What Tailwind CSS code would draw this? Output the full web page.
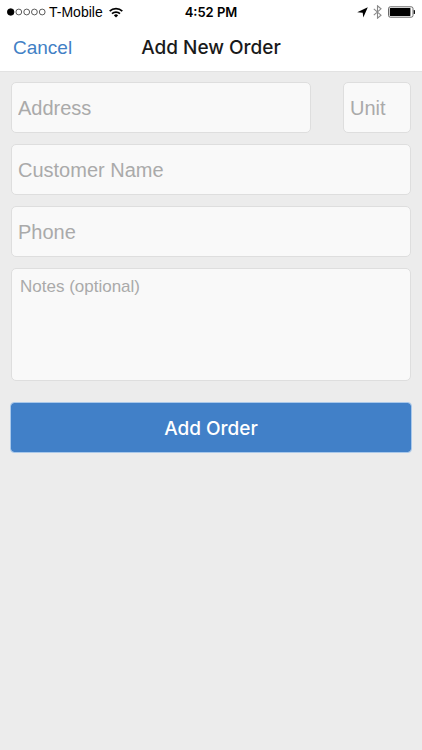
<!DOCTYPE html>
<html lang="en">
<head>
<meta charset="utf-8">
<meta name="viewport" content="width=device-width, initial-scale=1">
<title>Add New Order</title>
<script src="https://cdn.jsdelivr.net/npm/@tailwindcss/browser@4"></script>
</head>
<body class="min-h-screen bg-[#ececec] font-['Liberation_Sans',Arial,sans-serif] text-[#1a1a1a]">
<header class="border-b border-[#e2e2e2] bg-white">
  <div class="grid h-6 grid-cols-[1fr_auto_1fr] items-center px-[7px] text-black">
    <div class="flex items-center">
      <svg class="h-2 w-10" viewBox="0 0 40 8" fill="none" stroke="#333" stroke-width=".8" aria-hidden="true">
        <circle cx="3.7" cy="4" r="3.3" fill="#000" stroke="#000"/>
        <circle cx="11.8" cy="4" r="2.9"/><circle cx="19.7" cy="4" r="2.9"/><circle cx="27.4" cy="4" r="2.9"/><circle cx="35.2" cy="4" r="2.9"/>
      </svg>
      <span class="ml-[2px] text-[14px] leading-4">T-Mobile</span>
      <svg class="ml-[6px] h-[11px] w-[14px]" viewBox="0 0 14 11" fill="none" stroke="#000" stroke-width="1.7" aria-hidden="true">
        <path d="M.7 4.1a9 9 0 0 1 12.6 0M3 6.7a5.7 5.7 0 0 1 8 0"/>
        <path d="M4.9 8.4a3 3 0 0 1 4.2 0L7 10.6z" fill="#000" stroke="none"/>
      </svg>
    </div>
    <span class="font-['Inter','Liberation_Sans',sans-serif] text-[13px] leading-4 font-semibold">4:52 PM</span>
    <div class="flex items-center justify-end">
      <svg class="h-[11px] w-[11px]" viewBox="0 0 11 11" aria-hidden="true"><path d="M10.8.2 6.3 10.6 5.7 5.7.2 5.2z" fill="#000"/></svg>
      <svg class="ml-[5px] h-[14px] w-[9px]" viewBox="0 0 9 14" fill="none" stroke="#888" stroke-width="1.1" aria-hidden="true"><path d="M.8 3.8 8 10.2 4.5 13.2V.8L8 3.8.8 10.2"/></svg>
      <svg class="ml-[6px] h-3 w-[27px]" viewBox="0 0 27 12" aria-hidden="true">
        <rect x=".5" y=".8" width="24.5" height="10.4" rx="1.8" fill="none" stroke="#444" stroke-width=".8"/>
        <rect x="1.8" y="2" width="20.6" height="8" rx=".6" fill="#000"/>
        <path d="M25.7 4a2 2 0 0 1 0 4z" fill="#111"/>
      </svg>
    </div>
  </div>
  <div class="grid h-[47px] grid-cols-[1fr_auto_1fr] items-center px-[13px]">
    <button type="button" class="justify-self-start text-[19px] leading-6 text-[#4180c5]">Cancel</button>
    <h1 class="font-['Inter','Liberation_Sans',sans-serif] text-[19px] leading-6 font-medium">Add New Order</h1>
  </div>
</header>
<main class="px-[10px] pt-[10px]">
  <form>
    <div class="flex flex-col gap-[11px] px-px">
      <div class="flex gap-8">
        <input type="text" aria-label="Address" placeholder="Address" class="h-[51px] min-w-0 flex-1 rounded-[5px] border border-[#dedede] bg-[#f9f9f9] px-[6px] pt-[2px] text-[20px] placeholder:text-[#aaaaaa]">
        <input type="text" aria-label="Unit" placeholder="Unit" class="h-[51px] w-[68px] rounded-[5px] border border-[#dedede] bg-[#f9f9f9] px-[6px] pt-[2px] text-[20px] placeholder:text-[#aaaaaa]">
      </div>
      <input type="text" aria-label="Customer Name" placeholder="Customer Name" class="h-[51px] w-full rounded-[5px] border border-[#dedede] bg-[#f9f9f9] px-[6px] pt-[2px] text-[20px] placeholder:text-[#aaaaaa]">
      <input type="tel" aria-label="Phone" placeholder="Phone" class="h-[51px] w-full rounded-[5px] border border-[#dedede] bg-[#f9f9f9] px-[6px] pt-[2px] text-[20px] placeholder:text-[#aaaaaa]">
      <textarea aria-label="Notes (optional)" placeholder="Notes (optional)" class="block h-[113px] w-full resize-none rounded-[5px] border border-[#dedede] bg-[#f9f9f9] px-2 py-[8px] text-[17px] leading-5 placeholder:text-[#aaaaaa]"></textarea>
    </div>
    <button type="button" class="mt-[21px] h-[51px] w-full rounded-[4px] border border-[#a9c8ea] bg-[#4180c8] bg-clip-padding pt-[2px] font-['Inter','Liberation_Sans',sans-serif] text-[19px] leading-6 font-medium text-white">Add Order</button>
  </form>
</main>
</body>
</html>
